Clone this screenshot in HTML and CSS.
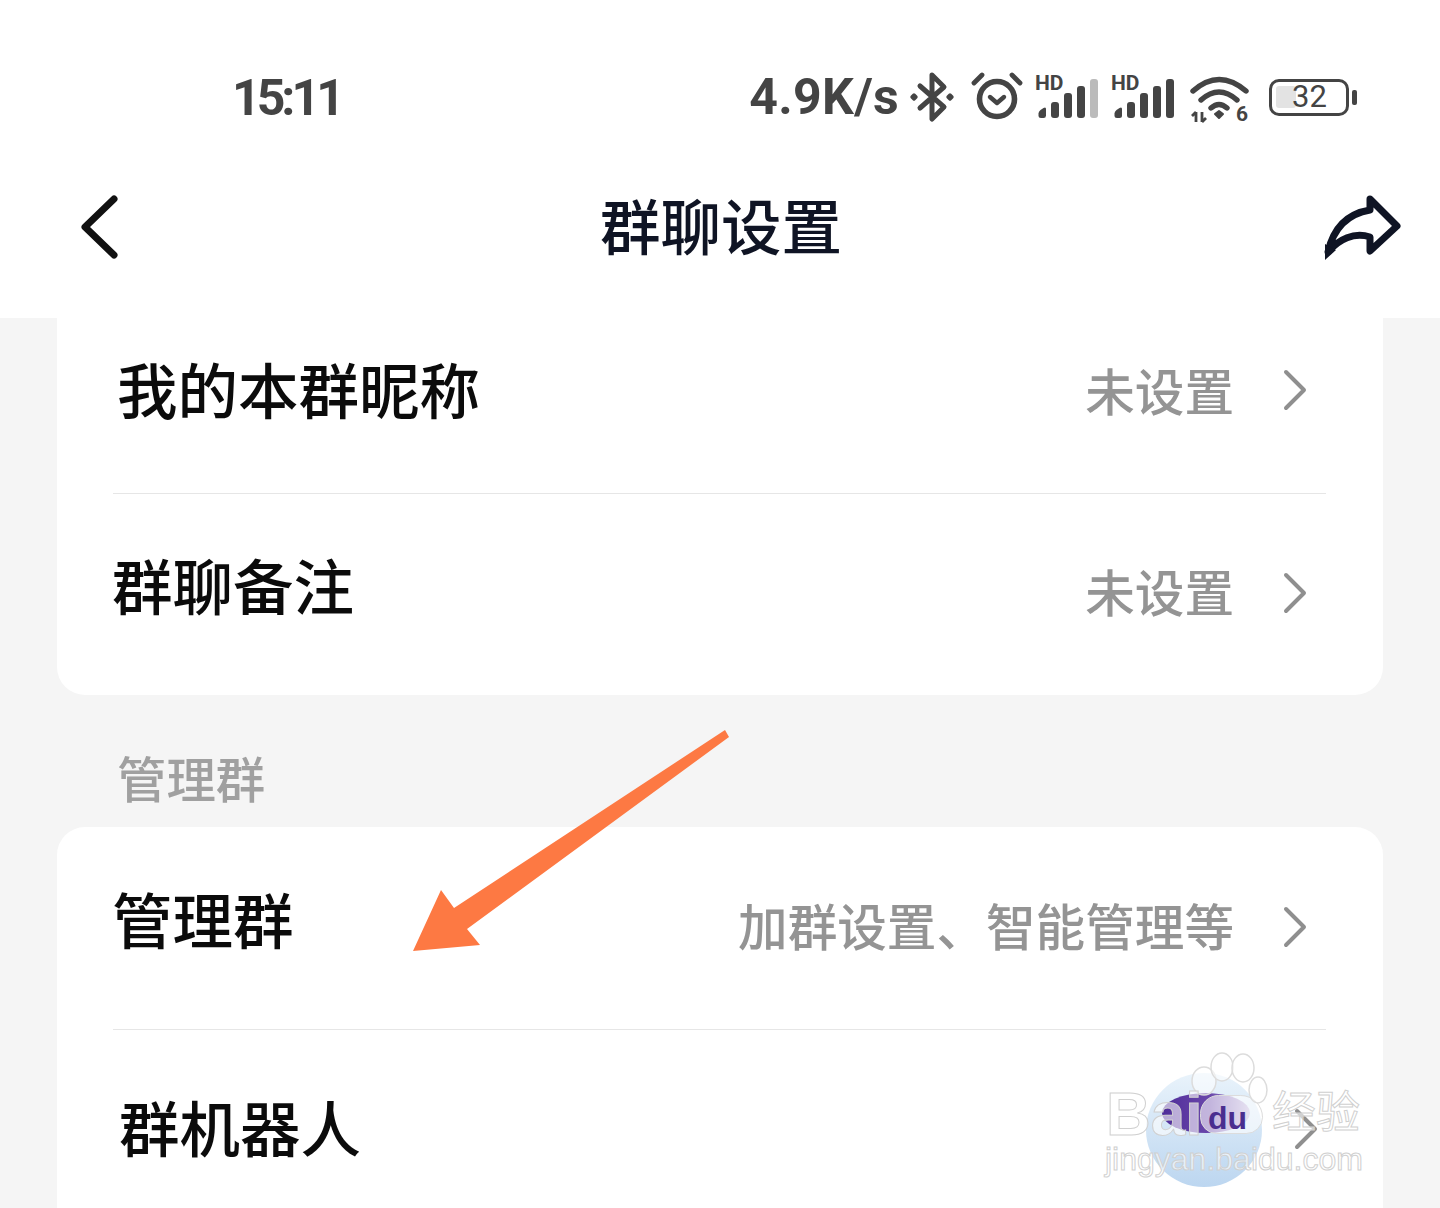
FILE: index.html
```html
<!DOCTYPE html>
<html lang="zh-CN">
<head>
  <meta charset="UTF-8">
  <meta name="viewport" content="width=device-width, initial-scale=1.0">
  <title>群聊设置</title>
  <link rel="stylesheet" href="styles.css">
</head>
<body>
  <div class="page">
    <div class="status-bar">
      <span class="clock">15:11</span>
      <div class="status-icons">
        <span class="speed">4.9K/s</span>
        <svg class="ic-bt" width="46" height="52" viewBox="0 0 46 52" fill="none" stroke="#444" stroke-width="5" stroke-linejoin="round" stroke-linecap="round">
          <path d="M11 15 L35 36 L23 48 V4 L35 16 L11 37"/>
          <path d="M3 26 L5 24 L7 26 L5 28 Z M39 26 L41 24 L43 26 L41 28 Z" stroke-width="3.4" fill="#444"/>
        </svg>
        <svg class="ic-alarm" width="52" height="50" viewBox="0 0 52 50" fill="none" stroke="#444" stroke-linecap="round" stroke-linejoin="round">
          <circle cx="26" cy="27" r="17.5" stroke-width="5.6"/>
          <path d="M19 25 L26 31 L33 25" stroke-width="4.4"/>
          <path d="M3 11 L11 3 M41 3 L49 11" stroke-width="4.8"/>
        </svg>
        <div class="signal">
          <span class="hd">HD</span>
          <svg width="62" height="42" viewBox="0 0 62 42" fill="#444">
            <path d="M3 41 a2.500 2.500 0 0 1 -2.500 -2.500 v-2 q0 -2 2 -3.500 l3 -2 q2.500 -1.500 2.500 1 v6.500 a2.500 2.500 0 0 1 -2.500 2.500z"/>
            <rect x="13" y="25" width="8" height="16" rx="3"/>
            <rect x="26" y="16" width="8" height="25" rx="3"/>
            <rect x="39" y="9" width="8" height="32" rx="3"/>
            <rect x="52" y="2" width="8" height="39" rx="3" fill="#bbb"/>
          </svg>
        </div>
        <div class="signal">
          <span class="hd">HD</span>
          <svg width="62" height="42" viewBox="0 0 62 42" fill="#444">
            <path d="M3 41 a2.500 2.500 0 0 1 -2.500 -2.500 v-2 q0 -2 2 -3.500 l3 -2 q2.500 -1.500 2.500 1 v6.500 a2.500 2.500 0 0 1 -2.500 2.500z"/>
            <rect x="13" y="25" width="8" height="16" rx="3"/>
            <rect x="26" y="16" width="8" height="25" rx="3"/>
            <rect x="39" y="9" width="8" height="32" rx="3"/>
            <rect x="52" y="2" width="8" height="39" rx="3"/>
          </svg>
        </div>
        <svg class="ic-wifi" width="60" height="50" viewBox="0 0 60 50" fill="none" stroke="#444" stroke-width="5.4" stroke-linecap="round">
          <path d="M3 15 Q29 -8 56 15"/>
          <path d="M11 24 Q29 8 47 24"/>
          <path d="M21 32 Q29 25 37 32"/>
          <path d="M25 38 L29 35 L33 38 L29 42 Z" fill="#444" stroke-width="2" stroke-linejoin="round"/>
          <path d="M6 36 V46 M2 40 L6 36 M12 36 V46 M12 46 L16 42" stroke-width="2.800" stroke-linecap="butt"/>
          <text x="46" y="45" class="wifi-six">6</text>
        </svg>
        <div class="battery">
          <div class="battery-body">
            <span class="battery-fill"></span>
            <span class="battery-num">32</span>
          </div>
          <span class="battery-cap"></span>
        </div>
      </div>
    </div>

    <header class="nav-bar">
      <svg class="back" width="40" height="64" viewBox="0 0 40 64" fill="none" stroke="#111" stroke-width="7" stroke-linecap="round" stroke-linejoin="round">
        <path d="M34 4 L5 32 L34 60"/>
      </svg>
      <h1 class="nav-title">群聊设置</h1>
      <svg class="share" width="80" height="66" viewBox="0 0 80 66" fill="none" stroke="#0f1424" stroke-width="7" stroke-linejoin="round">
        <path d="M6 58 C11 36 24 20 48 16 L48 5 L75 32 L48 57 L48 43 C32 38 17 45 6 58 Z"/>
        <path d="M3 66 L3 50 L14 56 Z" fill="#0f1424" stroke="none"/>
      </svg>
    </header>

    <main class="content">
      <section class="card card-first">
        <div class="row row-nick">
          <span class="row-label label-nick">我的本群昵称</span>
          <span class="row-value">未设置</span>
          <svg class="chevron" width="26" height="42" viewBox="0 0 26 42" fill="none" stroke="#8f8f8f" stroke-width="4" stroke-linecap="round" stroke-linejoin="round"><path d="M4 3 L22 21 L4 39"/></svg>
        </div>
        <div class="row row-remark">
          <span class="row-label label-remark">群聊备注</span>
          <span class="row-value">未设置</span>
          <svg class="chevron" width="26" height="42" viewBox="0 0 26 42" fill="none" stroke="#8f8f8f" stroke-width="4" stroke-linecap="round" stroke-linejoin="round"><path d="M4 3 L22 21 L4 39"/></svg>
        </div>
      </section>

      <h2 class="section-title">管理群</h2>

      <section class="card card-second">
        <div class="row row-manage">
          <span class="row-label label-manage">管理群</span>
          <span class="row-value">加群设置、智能管理等</span>
          <svg class="chevron" width="26" height="42" viewBox="0 0 26 42" fill="none" stroke="#8f8f8f" stroke-width="4" stroke-linecap="round" stroke-linejoin="round"><path d="M4 3 L22 21 L4 39"/></svg>
        </div>
        <div class="row row-robot">
          <span class="row-label label-robot">群机器人</span>
          <svg class="chevron chevron-robot" width="26" height="42" viewBox="0 0 26 42" fill="none" stroke="#8f8f8f" stroke-width="4" stroke-linecap="round" stroke-linejoin="round"><path d="M4 3 L22 21 L4 39"/></svg>
        </div>
      </section>
    </main>

    <!-- annotation arrow drawn over the screenshot -->
    <svg class="arrow" width="340" height="240" viewBox="400 720 340 240">
      <path fill="#fd7943" d="M413 951 L441 890 L454 908 L725 730 L729 737 L467 929 L480 945 Z"/>
    </svg>

    <!-- baidu jingyan watermark -->
    <div class="watermark">
      <div class="wm-ball"></div>
      <div class="wm-blob"></div>
      <div class="wm-pad"></div>
      <svg class="wm-paw" width="90" height="60" viewBox="0 0 90 60" fill="rgba(255,255,255,.55)" stroke="#dcdcdc" stroke-width="1.500">
        <ellipse cx="14" cy="29" rx="12" ry="14"/>
        <ellipse cx="32" cy="15" rx="11" ry="14"/>
        <ellipse cx="53" cy="16" rx="11" ry="14"/>
        <ellipse cx="68" cy="38" rx="9" ry="13"/>
      </svg>
      <span class="wm-bai">Bai</span>
      <span class="wm-du">du</span>
      <span class="wm-cn">经验</span>
      <span class="wm-url">jingyan.baidu.com</span>
    </div>
  </div>
</body>
</html>
```

FILE: styles.css
```css
* {
  box-sizing: border-box;
}

body {
  margin: 0;
  background: #f5f5f5;
  font-family: "Noto Sans CJK SC", "Noto Sans", sans-serif;
}

.page {
  position: relative;
  width: 1440px;
  height: 1208px;
  overflow: hidden;
  background: #f5f5f5;
}

/* status bar */
.status-bar {
  height: 160px;
  background: #fff;
  display: flex;
  align-items: flex-start;
  justify-content: space-between;
  padding: 67px 83px 0 232px;
}

.clock {
  font-family: "Roboto", sans-serif;
  font-size: 50px;
  line-height: 62px;
  font-weight: 700;
  color: #444;
  letter-spacing: -4px;
}

.status-icons {
  display: flex;
  align-items: center;
  height: 60px;
}

.speed {
  font-family: "Roboto", sans-serif;
  font-size: 50px;
  font-weight: 700;
  line-height: 60px;
  color: #444;
  letter-spacing: .3px;
  margin-right: 10px;
}

.ic-alarm {
  margin-left: 16px;
}

.signal {
  position: relative;
  width: 62px;
  height: 42px;
  margin-left: 15px;
  margin-top: 2px;
}

.signal + .signal {
  margin-left: 14px;
}

.signal svg {
  display: block;
}

.hd {
  position: absolute;
  left: -3px;
  top: -4px;
  font-family: "Roboto", sans-serif;
  font-size: 21px;
  line-height: 20px;
  font-weight: 700;
  color: #444;
}

.ic-wifi {
  margin-left: 14px;
  margin-top: 8px;
}

.wifi-six {
  font-family: "Roboto", sans-serif;
  font-size: 21px;
  font-weight: 700;
  fill: #444;
  stroke: none;
}

.battery {
  display: flex;
  align-items: center;
  margin-left: 19px;
}

.battery-body {
  position: relative;
  width: 80px;
  height: 37px;
  border: 3.500px solid #444;
  border-radius: 10px;
  padding: 4px;
}

.battery-fill {
  display: block;
  width: 20px;
  height: 22px;
  background: #e3e3e3;
  border-radius: 3px;
}

.battery-num {
  position: absolute;
  left: 20px;
  top: 0;
  font-family: "Roboto", sans-serif;
  font-size: 31px;
  line-height: 30px;
  color: #444;
}

.battery-cap {
  width: 5px;
  height: 15px;
  margin-left: 3px;
  background: #444;
  border-radius: 2px;
}

/* title bar */
.nav-bar {
  height: 158px;
  background: #fff;
  display: flex;
  align-items: center;
  justify-content: space-between;
  padding: 0 38px 24px 80px;
}

.nav-title {
  margin: 0 0 6px 0;
  font-size: 60.500px;
  line-height: 80px;
  font-weight: 500;
  color: #0f1424;
}

/* list */
.content {
  padding: 0 57px;
}

.card {
  background: #fff;
  overflow: hidden;
}

.card-first {
  height: 377px;
  border-radius: 0 0 28px 28px;
}

.card-second {
  border-radius: 28px 28px 0 0;
  height: 400px;
}

.row {
  display: flex;
  align-items: center;
  margin: 0 57px 0 56px;
  padding-right: 18px;
}

.row-nick {
  height: 176px;
  border-bottom: 1px solid #e6e6e6;
}

.row-remark {
  height: 201px;
}

.row-manage {
  height: 203px;
  border-bottom: 1px solid #e6e6e6;
}

.row-robot {
  height: 197px;
}

.row-label {
  font-size: 60.500px;
  line-height: 80px;
  font-weight: 500;
  color: #0b0b0b;
  margin-right: auto;
}

.row-value {
  font-size: 49.600px;
  line-height: 64px;
  font-weight: 500;
  color: #949494;
  margin-right: 48px;
}

.label-nick {
  margin-left: 4px;
  margin-bottom: 36px;
}

.row-nick .row-value {
  margin-bottom: 34px;
}

.row-nick .chevron {
  margin-bottom: 32px;
}

.label-remark {
  margin-left: -1px;
  margin-bottom: 22px;
}

.row-remark .row-value {
  margin-bottom: 10px;
}

.row-remark .chevron {
  margin-bottom: 4px;
}

.label-manage {
  margin-left: -1px;
  margin-bottom: 20px;
}

.row-manage .row-value {
  margin-bottom: 8px;
}

.row-manage .chevron {
  margin-bottom: 2px;
}

.label-robot {
  margin-left: 6px;
  margin-bottom: 6px;
}

.section-title {
  margin: 0;
  height: 132px;
  padding: 50px 0 0 60px;
  font-size: 49.400px;
  line-height: 64px;
  font-weight: 500;
  color: #a0a0a0;
}

.chevron-robot {
  margin-right: -11px;
}

/* overlays */
.arrow {
  position: absolute;
  left: 400px;
  top: 720px;
}

.watermark {
  position: absolute;
  left: 1100px;
  top: 1050px;
  width: 270px;
  height: 140px;
}

.wm-ball {
  position: absolute;
  left: 46px;
  top: 23px;
  width: 116px;
  height: 114px;
  border-radius: 50%;
  background: linear-gradient(#e9f3fb, #bcd6f0);
}

.wm-blob {
  position: absolute;
  left: 62px;
  top: 43px;
  width: 88px;
  height: 40px;
  border-radius: 50%;
  background: linear-gradient(90deg, #4f2d99, #6a47ab 55%, #c0b5dc);
}

.wm-pad {
  position: absolute;
  left: 100px;
  top: 45px;
  width: 63px;
  height: 39px;
  border-radius: 20px 24px 18px 18px;
  background: rgba(255, 255, 255, .6);
  border: 1px solid #dcdcdc;
}

.wm-paw {
  position: absolute;
  left: 90px;
  top: 2px;
}

.wm-bai,
.wm-du,
.wm-cn,
.wm-url {
  position: absolute;
  font-family: "Liberation Sans", sans-serif;
  color: rgba(255, 255, 255, .6);
  -webkit-text-stroke: 1px #d0d0d0;
}

.wm-bai {
  left: 6px;
  top: 36px;
  font-size: 62px;
  line-height: 56px;
  font-weight: 700;
}

.wm-du {
  left: 108px;
  top: 50px;
  font-size: 32px;
  line-height: 36px;
  font-weight: 700;
  color: #4a2e8f;
  -webkit-text-stroke: 0;
}

.wm-cn {
  left: 172px;
  top: 34px;
  font-family: "Noto Sans CJK SC", sans-serif;
  font-size: 44px;
  line-height: 50px;
}

.wm-url {
  left: 5px;
  top: 92px;
  font-size: 32px;
  line-height: 34px;
}
```
